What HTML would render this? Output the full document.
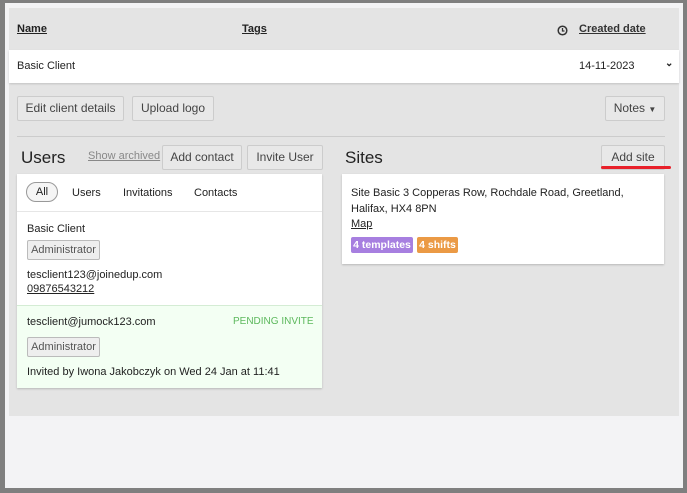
<!DOCTYPE html>
<html><head><meta charset="utf-8"><style>
*{box-sizing:border-box;margin:0;padding:0}
body{width:687px;height:493px;background:#7f7f7f;font-family:"Liberation Sans",sans-serif;font-size:11px;color:#222;position:relative;overflow:hidden}
.frame{position:absolute;left:5px;top:3px;right:4px;bottom:5px;background:#f3f3f5}
.main{position:absolute;left:9px;top:8px;width:670px;height:408px;background:#e4e4e4}
.a{position:absolute}
.u{text-decoration:underline}
.btn{position:absolute;height:25px;border:1px solid #ccc;background:#e8e8e8;border-radius:2px;font-size:12px;color:#444;line-height:23px;text-align:center}
.card{position:absolute;background:#fff;box-shadow:0 1px 2px rgba(0,0,0,.2)}
.tag{position:absolute;height:20px;width:73px;border:1px solid #bbb;background:#eee;border-radius:2px;line-height:18px;text-align:center;font-size:11px;color:#555}
.badge{position:absolute;top:63px;height:16px;background:#a77fe0;color:#fff;font-weight:bold;border-radius:2px;line-height:16px;text-align:center;font-size:10.5px}
</style></head><body>
<div class="frame"></div>
<div class="main">
<div class="a u" style="left:8px;top:15px;font-weight:bold;font-size:11px">Name</div>
<div class="a u" style="left:233px;top:15px;font-weight:bold;font-size:11px">Tags</div>
<svg class="a" style="left:548px;top:17px" width="11" height="11" viewBox="0 0 11 11"><circle cx="5.5" cy="5.5" r="4.3" fill="none" stroke="#333" stroke-width="1.5"/><path d="M5.5 3v3h2" fill="none" stroke="#333" stroke-width="1.3"/></svg>
<div class="a u" style="left:570px;top:15px;font-weight:bold;font-size:11px;color:#333">Created date</div>
<div class="a" style="left:0;top:42px;width:670px;height:33px;background:#fff;box-shadow:0 1px 2px rgba(0,0,0,.15)"></div>
<div class="a" style="left:8px;top:52px;font-size:11px">Basic Client</div>
<div class="a" style="left:570px;top:52px;font-size:11px">14-11-2023</div>
<div class="a" style="left:656px;top:50px;font-size:10px;font-weight:bold">&#8964;</div>
<div class="btn" style="left:8px;top:88px;width:107px">Edit client details</div>
<div class="btn" style="left:123px;top:88px;width:82px">Upload logo</div>
<div class="btn" style="left:596px;top:88px;width:60px">Notes <span style="font-size:8px">&#9660;</span></div>
<div class="a" style="left:8px;top:128px;width:648px;height:1px;background:#ccc"></div>
<div class="a" style="left:12px;top:140px;font-size:17px;color:#222">Users</div>
<div class="a u" style="left:79px;top:142px;font-size:11px;color:#888">Show archived</div>
<div class="btn" style="left:153px;top:137px;width:80px">Add contact</div>
<div class="btn" style="left:238px;top:137px;width:76px">Invite User</div>
<div class="a" style="left:336px;top:140px;font-size:17px;color:#222">Sites</div>
<div class="btn" style="left:592px;top:137px;width:64px">Add site</div>
<div class="a" style="left:592px;top:158px;width:70px;height:3px;background:#e8202a;border-radius:2px"></div>

<div class="card" style="left:8px;top:166px;width:305px;height:214px">
 <div class="a" style="left:9px;top:8px;width:32px;height:20px;border:1px solid #999;border-radius:10px;text-align:center;line-height:18px;font-size:11px;background:#f5f5f5">All</div>
 <div class="a" style="left:55px;top:13px">Users</div>
 <div class="a" style="left:106px;top:13px">Invitations</div>
 <div class="a" style="left:177px;top:13px">Contacts</div>
 <div class="a" style="left:0;top:37px;width:305px;height:1px;background:#e6e6e6"></div>
 <div class="a" style="left:10px;top:49px">Basic Client</div>
 <div class="tag" style="left:10px;top:66px">Administrator</div>
 <div class="a" style="left:10px;top:95px">tesclient123@joinedup.com</div>
 <div class="a u" style="left:10px;top:109px">09876543212</div>
 <div class="a" style="left:0;top:131px;width:305px;height:83px;background:#f3fff3;border-top:1px solid #d4ecd4"></div>
 <div class="a" style="left:10px;top:142px">tesclient@jumock123.com</div>
 <div class="a" style="left:216px;top:142px;color:#5cb85c;font-size:10px">PENDING INVITE</div>
 <div class="tag" style="left:10px;top:163px">Administrator</div>
 <div class="a" style="left:10px;top:192px">Invited by Iwona Jakobczyk on Wed 24 Jan at 11:41</div>
</div>

<div class="card" style="left:333px;top:166px;width:322px;height:90px">
 <div class="a" style="left:9px;top:11px;line-height:16px">Site Basic 3 Copperas Row, Rochdale Road, Greetland,<br>Halifax, HX4 8PN</div>
 <div class="a u" style="left:9px;top:44px">Map</div>
 <div class="badge" style="left:9px;width:62px">4 templates</div>
 <div class="badge" style="left:75px;width:41px;background:#eb9a45">4 shifts</div>
</div>
</div>
</body></html>
